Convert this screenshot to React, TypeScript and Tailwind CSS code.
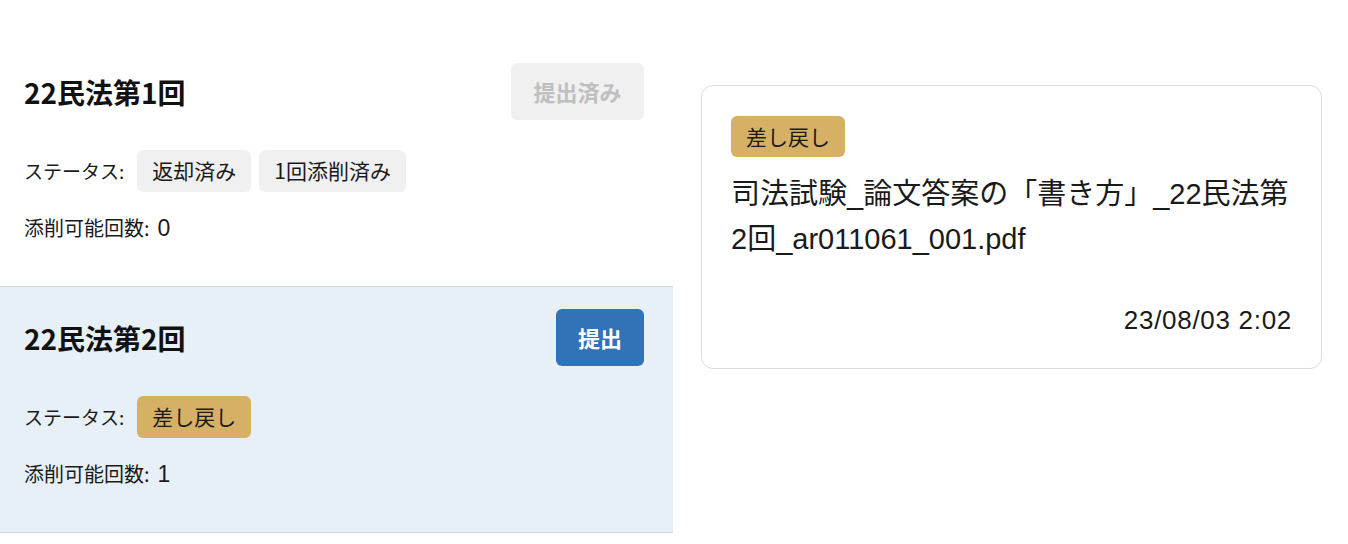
import React from "react";

const jp = "font-['Noto_Sans_CJK_JP',sans-serif]";
const card = "font-['Liberation_Sans','Noto_Sans_CJK_JP',sans-serif]";

type Item = {
  title: string;
  statuses: { label: string; tone: "gray" | "gold" }[];
  remaining: number;
  submitted: boolean;
  active: boolean;
};

const items: Item[] = [
  {
    title: "22民法第1回",
    statuses: [
      { label: "返却済み", tone: "gray" },
      { label: "1回添削済み", tone: "gray" },
    ],
    remaining: 0,
    submitted: true,
    active: false,
  },
  {
    title: "22民法第2回",
    statuses: [{ label: "差し戻し", tone: "gold" }],
    remaining: 1,
    submitted: false,
    active: true,
  },
];

function Chip({ label, tone }: { label: string; tone: "gray" | "gold" }) {
  return (
    <span
      className={`inline-flex h-[42px] items-center rounded-md px-[15px] text-[21px] text-[#1a1a1a] ${
        tone === "gold" ? "bg-[#d6b064]" : "bg-[#f0f0f0]"
      }`}
    >
      {label}
    </span>
  );
}

function Row({ item }: { item: Item }) {
  return (
    <div
      className={`h-[246px] border-b border-[#d4d4d4] pl-6 pr-[29px] pt-[22px] ${
        item.active ? "bg-[#e8f0f7]" : "bg-white"
      }`}
    >
      <div className="flex items-center justify-between">
        <h2 className="text-[28px] font-bold leading-none text-[#111]">{item.title}</h2>
        {item.submitted ? (
          <button
            disabled
            className="h-[57px] w-[133px] rounded-md bg-[#f0f0f0] text-[22px] font-bold text-[#bfbfbf]"
          >
            提出済み
          </button>
        ) : (
          <button className="h-[57px] w-[88px] rounded-md bg-[#3172b8] text-[22px] font-bold text-white">
            提出
          </button>
        )}
      </div>
      <div className="mt-[30px] flex items-center gap-2">
        <span className="mr-[5px] text-[19px] text-[#1a1a1a]">ステータス:</span>
        {item.statuses.map((s) => (
          <Chip key={s.label} label={s.label} tone={s.tone} />
        ))}
      </div>
      <div className="mt-[22px] flex items-center gap-2 leading-[28px] text-[#1a1a1a]">
        <span className="text-[20px]">添削可能回数:</span>
        <span className="font-['Liberation_Sans',sans-serif] text-[23px]">{item.remaining}</span>
      </div>
    </div>
  );
}

export default function App() {
  return (
    <div className={`flex h-[544px] w-[1348px] bg-white ${jp}`}>
      <div className="mt-[41px] w-[673px] shrink-0">
        {items.map((it) => (
          <Row key={it.title} item={it} />
        ))}
      </div>
      <div className="ml-7 mt-[85px]">
        <div
          className={`h-[284px] w-[621px] rounded-xl border border-[#dcdcdc] px-[29px] pt-[30px] ${card}`}
        >
          <span className="inline-flex h-[41px] items-center rounded-md bg-[#d6b064] px-[15px] text-[21px] text-[#1a1a1a] font-['Noto_Sans_CJK_JP',sans-serif]">
            差し戻し
          </span>
          <p className="mt-[15px] text-[29px] leading-[45px] text-[#1a1a1a]">
            司法試験_論文答案の「書き方」_22民法第2回_ar011061_001.pdf
          </p>
          <p className="mt-[40px] text-right text-[26px] leading-[36px] tracking-[0.7px] text-[#1a1a1a]">
            23/08/03 2:02
          </p>
        </div>
      </div>
    </div>
  );
}
